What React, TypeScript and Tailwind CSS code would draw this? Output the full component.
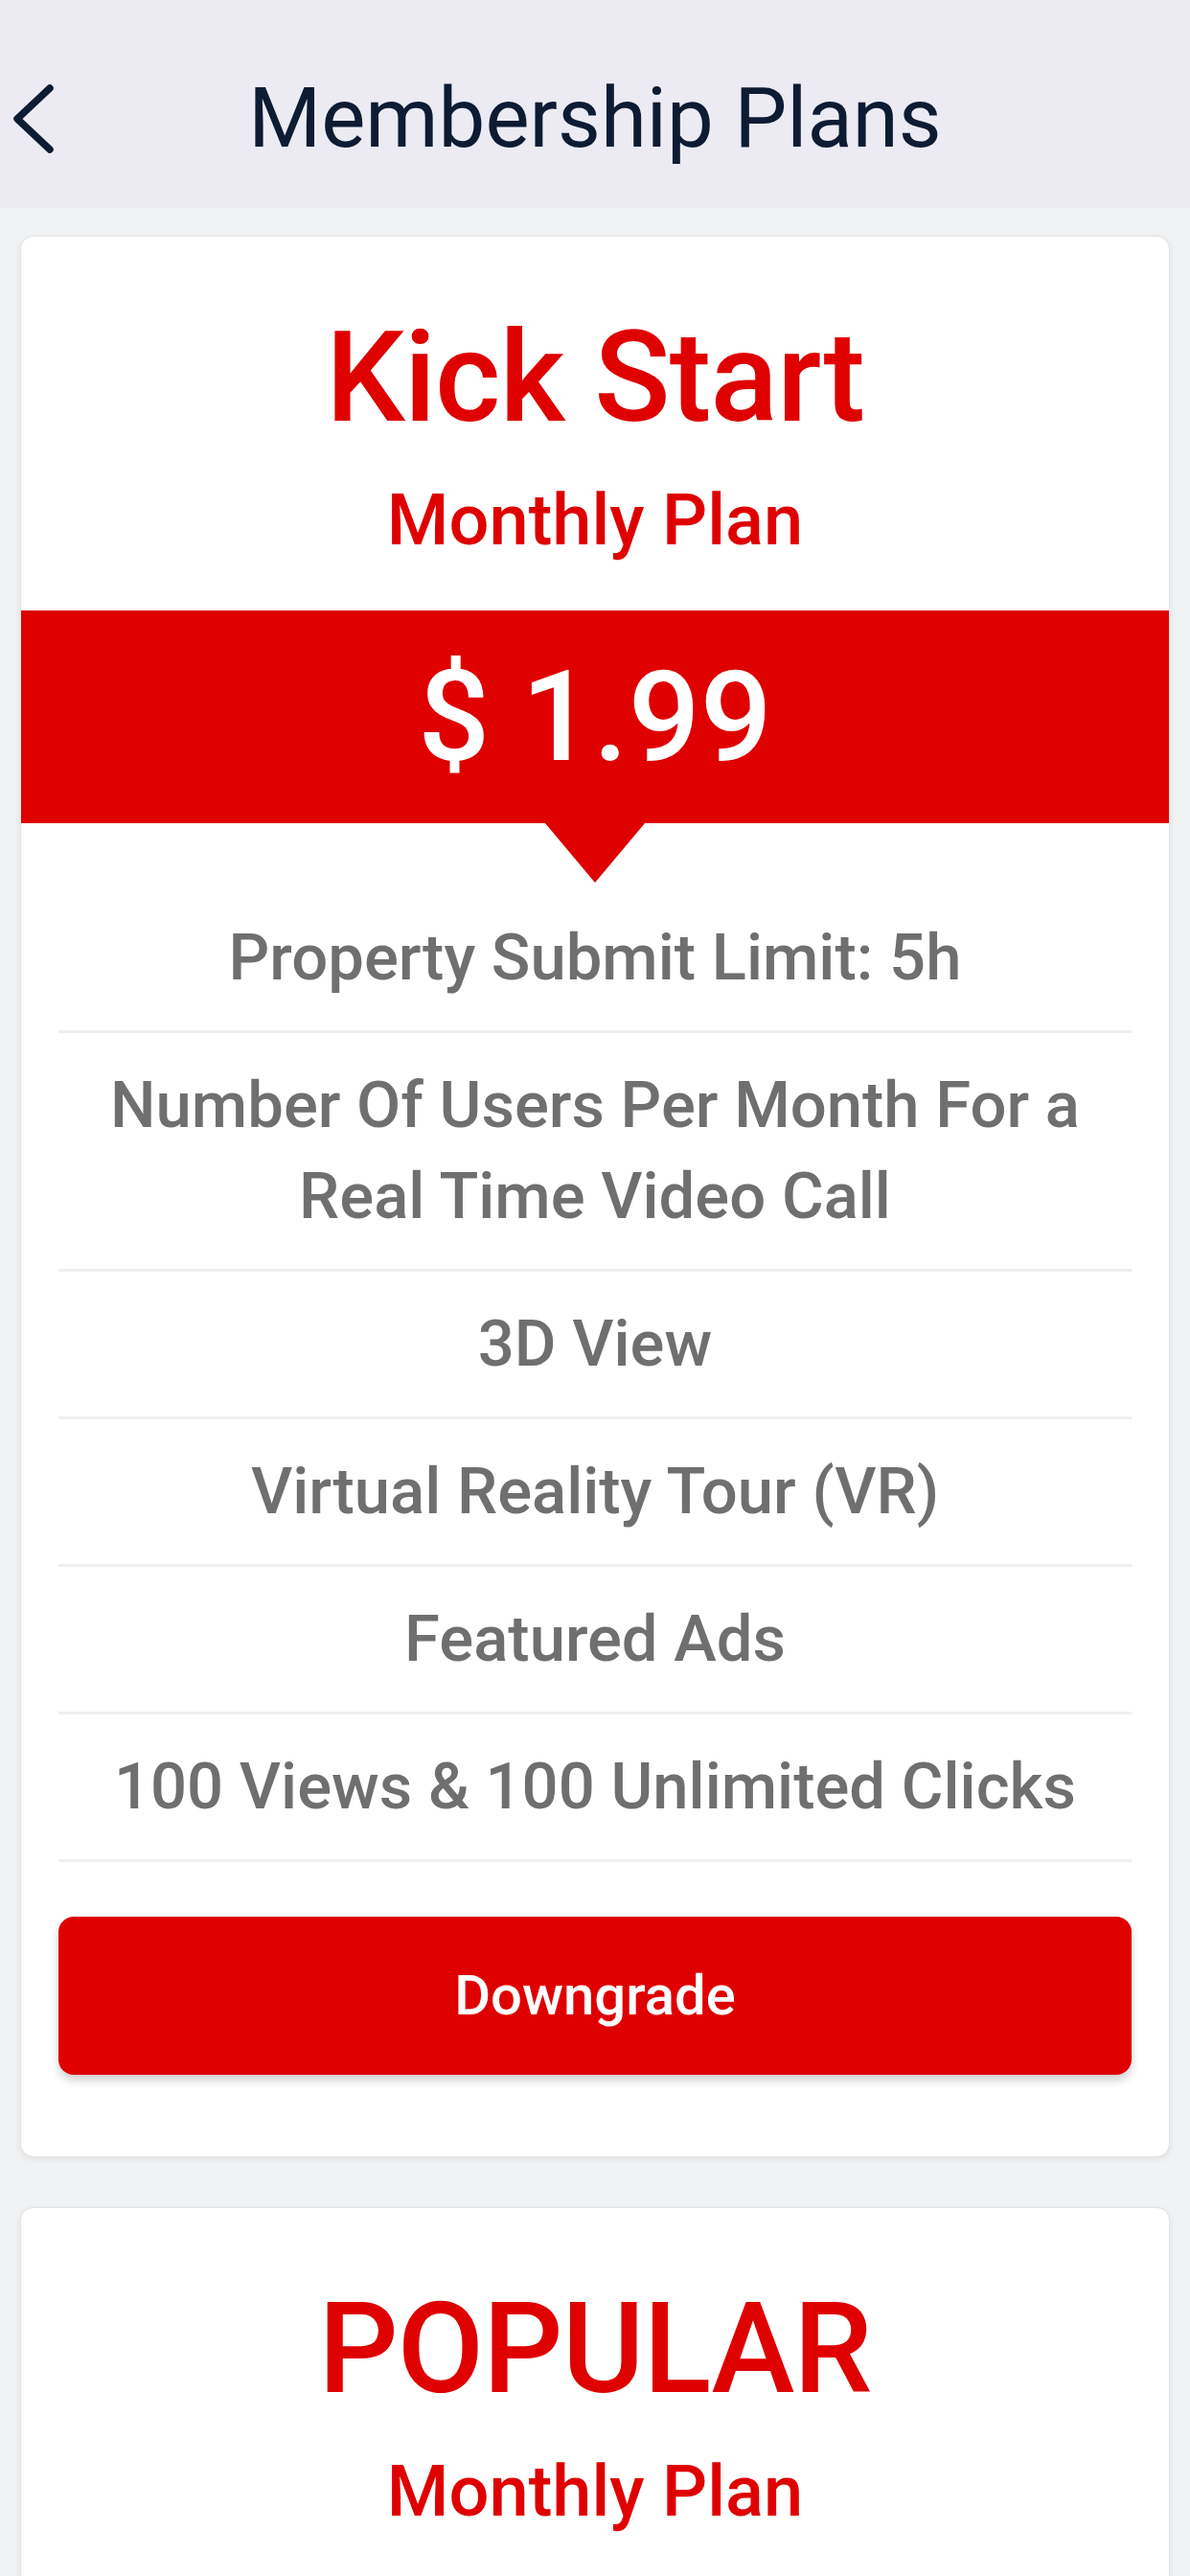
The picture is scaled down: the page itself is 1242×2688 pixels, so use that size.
import React from "react";

type Plan = {
  name: string;
  period: string;
  price?: string;
  features: string[];
  action?: string;
};

const plans: Plan[] = [
  {
    name: "Kick Start",
    period: "Monthly Plan",
    price: "$ 1.99",
    features: [
      "Property Submit Limit: 5h",
      "Number Of Users Per Month For a Real Time Video Call",
      "3D View",
      "Virtual Reality Tour (VR)",
      "Featured Ads",
      "100 Views & 100 Unlimited Clicks",
    ],
    action: "Downgrade",
  },
  {
    name: "POPULAR",
    period: "Monthly Plan",
    features: [],
  },
];

function PlanCard({ plan }: { plan: Plan }) {
  return (
    <div className="bg-white rounded-[14px] border border-[#e4e4e4] shadow-[0_2px_6px_rgba(0,0,0,0.08)] pt-[79px] pb-[85px]">
      {/* title */}
      <div className="flex flex-col items-center text-[#df0000] font-medium">
        <h2 className="text-[131px] leading-[136px] tracking-[-1px]">{plan.name}</h2>
        <p className="mt-[43px] text-[74px] leading-[76px]">{plan.period}</p>
      </div>

      {/* price band */}
      {plan.price && (
        <div className="relative mt-[56px] h-[222px] bg-[#df0000] flex items-center justify-center">
          <span className="text-white font-medium text-[132px] leading-[132px]">
            {plan.price}
          </span>
          <div className="absolute top-full left-1/2 -translate-x-1/2 w-0 h-0 border-l-[52px] border-r-[52px] border-t-[62px] border-l-transparent border-r-transparent border-t-[#df0000]" />
        </div>
      )}

      {/* features */}
      {plan.features.length > 0 && (
        <ul className="mt-[65px] px-[39px]">
          {plan.features.map((f) => (
            <li
              key={f}
              className="border-b-[3px] border-[#efefef] py-[28px] px-[20px] text-center text-[67px] leading-[95px] font-medium text-[#6f6f6f]"
            >
              {f}
            </li>
          ))}
        </ul>
      )}

      {plan.action && (
        <div className="px-[39px] mt-[57px]">
          <button className="w-full h-[165px] rounded-[16px] bg-[#df0000] text-white text-[58px] font-medium shadow-[0_6px_10px_rgba(0,0,0,0.18)]">
            {plan.action}
          </button>
        </div>
      )}
    </div>
  );
}

export default function App() {
  return (
    <div
      className="h-[2688px] overflow-hidden flex flex-col bg-[#f1f2f4]"
      style={{ fontFamily: "Roboto, 'Liberation Sans', sans-serif" }}
    >
      {/* HEADER */}
      <header className="h-[217px] shrink-0 bg-[#ecebf3] relative flex items-center justify-center">
        <button className="absolute left-[10px] top-[86px] w-[50px] h-[76px] flex items-center justify-center">
          <svg width="50" height="76" viewBox="0 0 50 76">
            <polyline
              points="42,6 8,38 42,70"
              fill="none"
              stroke="#0d1b33"
              strokeWidth="7.5"
              strokeLinecap="round"
              strokeLinejoin="round"
            />
          </svg>
        </button>
        <h1 className="text-[87px] leading-none text-[#0d1b33] mt-[30px]">
          Membership Plans
        </h1>
      </header>

      {/* CONTENT */}
      <main className="px-[21px] pt-[29px] flex flex-col gap-[52px]">
        {plans.map((p) => (
          <PlanCard key={p.name} plan={p} />
        ))}
      </main>
    </div>
  );
}
